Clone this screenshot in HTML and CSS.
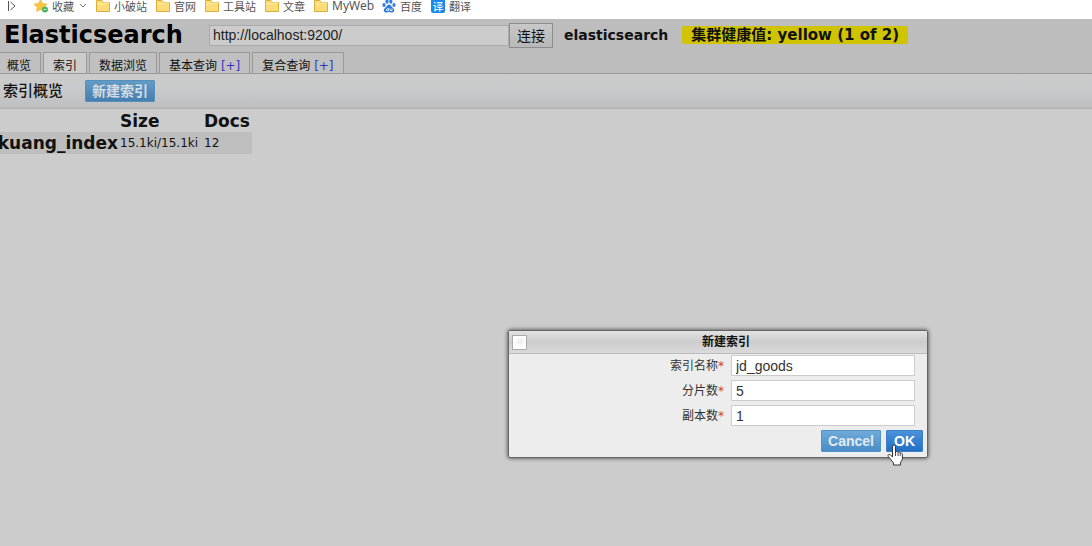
FILE: index.html
```html
<!DOCTYPE html>
<html lang="zh-CN">
<head>
<meta charset="utf-8">
<title>Elasticsearch</title>
<link rel="stylesheet" href="styles.css">
</head>
<body>
<svg class="defs" aria-hidden="true">
  <symbol id="folder" viewBox="0 0 14 14"><path d="M.5 12.5V1.5H6L7.5 3.5H13.5V12.5Z" fill="#fbdc78" stroke="#dcae3c"/><path d="M1 5H6.500L8 4H13" fill="none" stroke="#fff0ad"/></symbol>
</svg>
<nav class="bookmarks">
  <svg class="expand" viewBox="0 0 9 12"><path d="M1.500 1V11M3.500 2L8 6L3.500 10" fill="none" stroke="#555"/></svg>
  <a class="bookmark" href="#"><svg class="icon" viewBox="0 0 14 14"><path d="M6.500 .5L8.500 4.500L13 5.200L9.700 8.300L10.500 12.500L6.500 10.500L2.500 12.500L3.300 8.300L0 5.200L4.500 4.500Z" fill="#fdc53a" stroke="#e9a92b" stroke-width=".6"/><circle cx="11" cy="10.500" r="3" fill="#4cb562"/><path d="M9.500 10.500H12.500" stroke="#b6e7bd"/></svg>收藏</a>
  <svg class="chevron" viewBox="0 0 8 6"><path d="M1 1L4 4L7 1" fill="none" stroke="#777"/></svg>
  <a class="bookmark" href="#"><svg class="icon"><use href="#folder"/></svg>小破站</a>
  <a class="bookmark" href="#"><svg class="icon"><use href="#folder"/></svg>官网</a>
  <a class="bookmark" href="#"><svg class="icon"><use href="#folder"/></svg>工具站</a>
  <a class="bookmark" href="#"><svg class="icon"><use href="#folder"/></svg>文章</a>
  <a class="bookmark latin" href="#"><svg class="icon"><use href="#folder"/></svg>MyWeb</a>
  <a class="bookmark" href="#"><svg class="icon" viewBox="0 0 14 14" fill="#2f7de0"><ellipse cx="2" cy="6" rx="1.600" ry="2.100"/><ellipse cx="5" cy="2.500" rx="1.600" ry="2.200"/><ellipse cx="8.800" cy="2.500" rx="1.600" ry="2.200"/><ellipse cx="12" cy="6" rx="1.600" ry="2.100"/><path d="M7 5.500C9 5.500 9.500 8 11.500 9.500C13 11 12 13.500 10 13.500C8.500 13.500 8 13 7 13C6 13 5.500 13.500 4 13.500C2 13.500 1 11 2.500 9.500C4.500 8 5 5.500 7 5.500Z"/><path d="M5 9.500H6.500V11.500H4.500V10M8 9.500V11.500H10V9.500" fill="none" stroke="#fff" stroke-width=".8"/></svg>百度</a>
  <a class="bookmark" href="#"><span class="icon translate">译</span>翻译</a>
</nav>

<header class="header">
  <form class="connect">
    <h1 class="brand">Elasticsearch</h1>
    <input class="address" type="text" value="http://localhost:9200/" aria-label="http">
    <button class="connect-button" type="button">连接</button>
    <span class="cluster">elasticsearch</span>
    <span class="health">集群健康值: yellow (1 of 2)</span>
  </form>
  <nav class="tabs">
    <a class="tab" href="#">概览</a>
    <a class="tab active" href="#">索引</a>
    <a class="tab" href="#">数据浏览</a>
    <a class="tab" href="#">基本查询 <span class="plus">[+]</span></a>
    <a class="tab" href="#">复合查询 <span class="plus">[+]</span></a>
  </nav>
</header>

<main class="main">
  <div class="toolbar">
    <h2 class="toolbar-title">索引概览</h2>
    <button class="action" type="button">新建索引</button>
  </div>
  <table class="indices">
    <thead><tr><th class="name"></th><th class="size">Size</th><th>Docs</th></tr></thead>
    <tbody><tr><th class="name">kuang_index</th><td>15.1ki/15.1ki</td><td>12</td></tr></tbody>
  </table>
</main>

<form class="dialog" role="dialog" aria-labelledby="dialog-title">
  <div class="dialog-bar">
    <button class="close" type="button" aria-label="关闭"><svg viewBox="0 0 10 10"><path d="M2 2L8 8M8 2L2 8M1 5H2M8 5H9M5 1V2M5 8V9" stroke="#ccc" stroke-dasharray="1 1"/></svg></button>
    <h2 class="dialog-title" id="dialog-title">新建索引</h2>
  </div>
  <div class="fields">
    <label for="index-name">索引名称<span class="required">*</span></label><input id="index-name" type="text" value="jd_goods">
    <label for="shards">分片数<span class="required">*</span></label><input id="shards" type="text" value="5">
    <label for="replicas">副本数<span class="required">*</span></label><input id="replicas" type="text" value="1">
  </div>
  <div class="actions">
    <button class="action" type="button">Cancel</button>
    <button class="action primary" type="button">OK</button>
  </div>
  <svg class="pointer" viewBox="0 0 16 22"><path d="M5.500 13V3C5.500 .5 8.500 .5 8.500 3V8C9 7 11 7.300 11 8.600C11.600 7.700 13.200 8 13.200 9.300C14 8.700 15.400 9.200 15.400 10.500V14C15.400 16 14 17.500 13.500 19V21H6.500V19C5 17 3 14.500 1.300 12.500C.3 11 2 9.800 3.300 10.800Z" fill="#fff" stroke="#333"/><path d="M8.500 8V12M11 9V12M13.200 9.500V12" stroke="#333" stroke-width=".9"/></svg>
</form>
</body>
</html>
```
FILE: styles.css
```css
* { box-sizing: border-box; }
body {
  margin: 0;
  min-height: 100vh;
  background: #ccc;
  color: #111;
  font-family: "DejaVu Sans", "Noto Sans CJK SC", sans-serif;
  font-size: 12px;
}
h1, h2 { margin: 0; }
a { color: inherit; text-decoration: none; }
button, input { margin: 0; font-family: "Liberation Sans", "Noto Sans CJK SC", sans-serif; }
.defs { position: absolute; width: 0; height: 0; }

.bookmarks {
  display: flex;
  align-items: center;
  height: 19px;
  padding: 0 0 7px 7px;
  background: #fff;
  color: #555;
  font-family: "Noto Sans CJK SC", sans-serif;
  font-size: 11px;
  line-height: 12px;
}
.expand { width: 9px; height: 12px; margin-right: 18px; }
.chevron { width: 8px; height: 6px; margin: 0 9px 0 -4px; }
.bookmark { display: flex; align-items: center; gap: 4px; margin-right: 9px; white-space: nowrap; }
.icon { flex: none; width: 14px; height: 14px; }
.latin { margin-right: 8px; font-family: "Noto Sans", sans-serif; font-size: 12px; }
.translate { border-radius: 2px; background: #1688ee; color: #fff; line-height: 14px; text-align: center; }

.header { padding-top: 3px; border-bottom: 1px solid #999; background: #bdbdbd; }
.connect { display: flex; align-items: center; height: 26px; padding-left: 4px; white-space: nowrap; }
.brand { width: 205px; color: #000; font-size: 24px; line-height: 28px; }
.address { width: 300px; height: 21px; padding: 0 3px; border: 1px solid #aaa; background: #ccc; color: #222; font-size: 14px; }
.connect-button { width: 44px; height: 25px; padding: 0; border: 1px solid #8c8c8c; background: linear-gradient(#c8c8c8, #b8b8b8); color: #111; font-size: 14px; }
.cluster { margin: 0 14px 0 11px; font-size: 14px; font-weight: bold; }
.health { padding: 0 9px; border-radius: 2px; background: #d0c400; font-size: 15px; font-weight: bold; line-height: 18px; }

.tabs { display: flex; gap: 2px; margin-top: 4px; height: 21px; }
.tab { padding: 0 9px; border: 1px solid #999; border-bottom: 0; background: #c0c0c0; line-height: 27px; white-space: nowrap; overflow: hidden; }
.tab:first-child { padding-left: 7px; border-left: 0; }
.tab.active { background: #ccc; }
.plus { color: #3333c4; }

.toolbar { display: flex; align-items: center; gap: 22px; height: 35px; padding-left: 3px; border-bottom: 1px solid #b0b0b0; background: linear-gradient(#cbcbcb, #c9cacb 40%, #bebfc0); }
.toolbar-title { font-size: 15px; font-weight: 500; line-height: 34px; }
.action { height: 22px; padding: 0 6px; border: 1px solid #4f93c8; border-radius: 1px; background: linear-gradient(#6fabd8, #4a8cc8); color: #e4eaf0; font-size: 14px; font-weight: bold; line-height: 20px; white-space: nowrap; }
.toolbar .action { border-color: #5590bd; background: linear-gradient(#649bc4, #457fb0); color: #d4dce2; }

.indices { margin: 1px 0 0 -5px; border-collapse: collapse; }
.indices th, .indices td { height: 22px; padding: 0 2px 0 0; text-align: left; white-space: nowrap; }
.indices th { font-size: 17px; line-height: 22px; }
.indices .name { width: 125px; text-align: right; }
.indices .size { width: 84px; }
.indices tbody tr { background: #bebebe; }

.dialog { position: absolute; left: 508px; top: 330px; width: 420px; border: 1px solid #666; border-radius: 2px; background: #ededed; box-shadow: 0 0 4px #333; }
.dialog-bar { display: grid; grid-template-columns: 16px 1fr; align-items: center; height: 23px; padding: 0 3px; border-bottom: 1px solid #bbb; background: linear-gradient(#e2e2e2, #ccc 50%, #dadada); }
.close { width: 15px; height: 15px; padding: 1px; border: 1px solid #aaa; background: #fff; line-height: 0; }
.close svg { width: 10px; height: 10px; }
.dialog-title { font-size: 12px; line-height: 20px; text-align: center; }
.fields { display: grid; grid-template-columns: 1fr 184px; align-items: center; gap: 4px 7px; padding: 1px 12px 0 0; color: #333; }
.fields label { text-align: right; line-height: 20px; }
.fields input { width: 100%; height: 21px; padding: 0 4px; border: 1px solid #ccc; background: #fff; color: #333; font-size: 14px; }
.required { color: #d04040; }
.actions { display: flex; justify-content: flex-end; gap: 5px; padding: 4px 4px 5px; }
.primary { padding: 0 7px; border-color: #3a81cc; background: linear-gradient(#4c91db, #216fc3); color: #fff; }
.pointer { position: absolute; right: 24px; bottom: -9px; width: 16px; height: 22px; }
```
